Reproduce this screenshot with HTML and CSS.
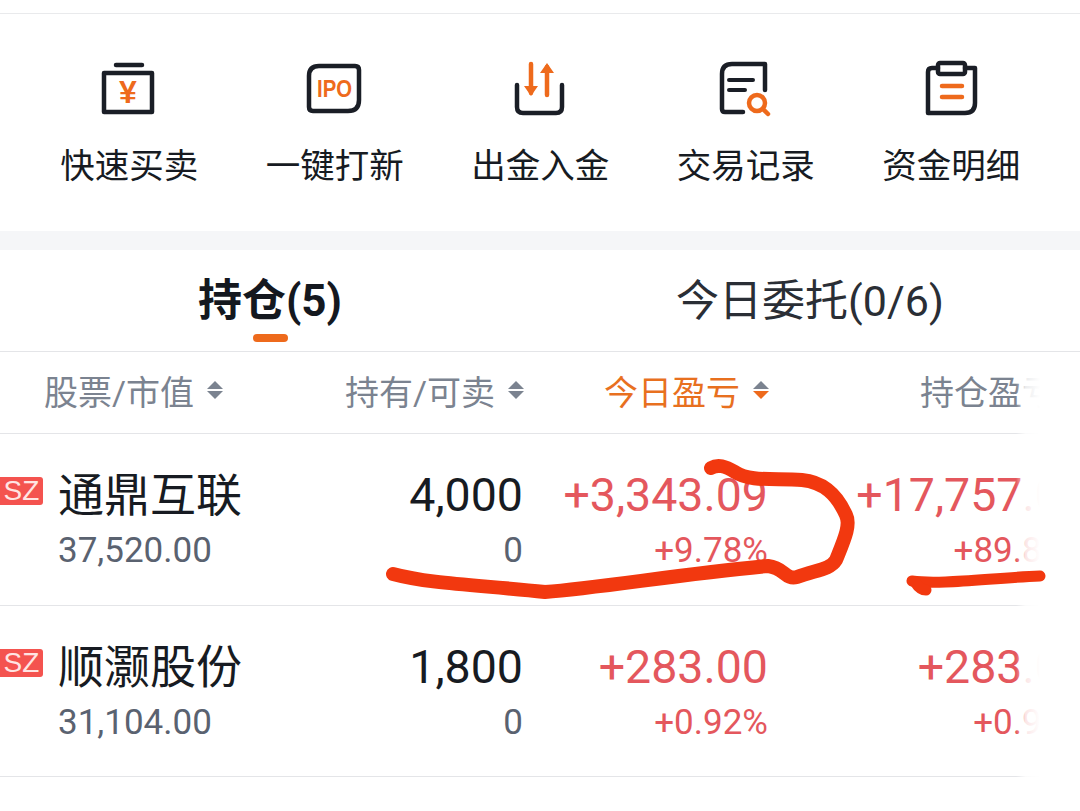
FILE: index.html
```html
<!DOCTYPE html>
<html lang="zh-CN">
<head>
    <meta charset="UTF-8">
    <meta name="viewport" content="width=device-width, initial-scale=1.0">
    <title>持仓</title>
    <link rel="stylesheet" href="styles.css">
</head>
<body>
    <div class="quick-menu">
        <div class="menu-item">
            <svg class="menu-icon" viewBox="0 0 60 60">
                <path class="dark" d="M17 6H43M5 14H53V53H5Z"/>
                <text class="yen" x="29" y="44">¥</text>
            </svg>
            <span>快速买卖</span>
        </div>
        <div class="menu-item">
            <svg class="menu-icon" viewBox="0 0 60 60">
                <path class="dark" d="M14 7H50Q54 7 54 11V41Q54 52 43 52H8Q4 52 4 48V17Q4 7 14 7Z"/>
                <text class="ipo" x="12" y="38" textLength="35" lengthAdjust="spacingAndGlyphs">IPO</text>
            </svg>
            <span>一键打新</span>
        </div>
        <div class="menu-item">
            <svg class="menu-icon" viewBox="0 0 60 60">
                <path class="dark" d="M7 26V48Q7 54 13 54H46Q52 54 52 48V26"/>
                <path class="orange" d="M21 5V34M37 36V8"/>
                <path class="orange-fill" d="M14 27H28L21 37ZM30 14H44L37 4Z"/>
            </svg>
            <span>出金入金</span>
        </div>
        <div class="menu-item">
            <svg class="menu-icon" viewBox="0 0 60 60">
                <path class="dark" d="M49 31V5H16Q6 5 6 15V50Q6 53 9 53H27"/>
                <path class="dark thin" d="M13 21H37M13 31H29"/>
                <circle class="orange" cx="41" cy="44" r="8"/>
                <path class="orange" d="M47 50L52 55"/>
            </svg>
            <span>交易记录</span>
        </div>
        <div class="menu-item">
            <svg class="menu-icon" viewBox="0 0 60 60">
                <rect class="dark" x="17" y="4" width="27" height="11" rx="2"/>
                <path class="dark" d="M17 9H11Q7 9 7 13V54H44Q54 54 54 44V9H44"/>
                <path class="orange" d="M21 27H41M21 38H41"/>
            </svg>
            <span>资金明细</span>
        </div>
    </div>

    <div class="band"></div>

    <div class="tabs">
        <div class="tab active">持仓(5)</div>
        <div class="tab">今日委托(0/6)</div>
    </div>

    <div class="holdings">
        <div class="row head-row">
            <div class="head-cell left">股票/市值<i class="sort"></i></div>
            <div class="head-cell">持有/可卖<i class="sort"></i></div>
            <div class="head-cell current">今日盈亏<i class="sort down"></i></div>
            <div class="head-cell last">持仓盈亏<i class="sort"></i></div>
        </div>
        <div class="row stock-row">
            <div class="stock">
                <span class="badge">SZ</span>
                <div>
                    <div class="big name">通鼎互联</div>
                    <div class="small">37,520.00</div>
                </div>
            </div>
            <div class="num">
                <div class="big">4,000</div>
                <div class="small">0</div>
            </div>
            <div class="num up">
                <div class="big">+3,343.09</div>
                <div class="small">+9.78%</div>
            </div>
            <div class="num up last">
                <div class="big">+17,757.09</div>
                <div class="small">+89.86%</div>
            </div>
        </div>
        <div class="row stock-row">
            <div class="stock">
                <span class="badge">SZ</span>
                <div>
                    <div class="big name">顺灏股份</div>
                    <div class="small">31,104.00</div>
                </div>
            </div>
            <div class="num">
                <div class="big">1,800</div>
                <div class="small">0</div>
            </div>
            <div class="num up">
                <div class="big">+283.00</div>
                <div class="small">+0.92%</div>
            </div>
            <div class="num up last">
                <div class="big">+283.00</div>
                <div class="small">+0.92%</div>
            </div>
        </div>
        <div class="fade"></div>
    </div>

    <!-- hand-drawn marks on top of the screenshot -->
    <svg class="scribble" viewBox="0 0 1080 811">
        <path d="M393 574C430 584 480 585 545 592C600 588 680 574 768 566C785 568 785 580 797 577C815 570 830 570 836 560C844 540 851 525 846 515C837 495 824 482 802 480C775 478 750 482 735 472C725 466 718 464 711 468"/>
        <path class="thin-mark" d="M912 581C940 585 990 578 1040 576"/>
        <path class="thin-mark" d="M915 582Q920 590 926 590"/>
    </svg>
</body>
</html>
```

FILE: styles.css
```css
body {
    margin: 0;
    height: 811px;
    overflow: hidden;
    position: relative;
    background-color: #fff;
    color: #171b22;
    font-family: Roboto, "Noto Sans CJK SC", sans-serif;
}

/* top menu */
.quick-menu {
    display: grid;
    grid-template-columns: repeat(5, 205.5px);
    height: 218px;
    margin-top: 13px;
    padding-left: 26.5px;
    border-top: 1px solid #e9eaec;
    box-sizing: border-box;
}

.menu-item {
    display: flex;
    flex-direction: column;
    align-items: center;
    padding-top: 45px;
    font-size: 34.5px;
    line-height: 50px;
}

.menu-icon {
    width: 60px;
    height: 60px;
    margin-bottom: 22px;
    fill: none;
}

.dark {
    stroke: #1a1e26;
    stroke-width: 4.5;
    stroke-linecap: round;
    stroke-linejoin: round;
    fill: none;
}

.dark.thin {
    stroke-width: 4;
}

.orange {
    stroke: #ee6a1c;
    stroke-width: 4.5;
    stroke-linecap: round;
    fill: none;
}

.orange-fill {
    fill: #ee6a1c;
}

.yen {
    fill: #ee6a1c;
    font-family: "Liberation Sans", sans-serif;
    font-size: 32px;
    font-weight: bold;
    text-anchor: middle;
}

.ipo {
    fill: #ee6a1c;
    font-family: "Liberation Sans", sans-serif;
    font-size: 24px;
    font-weight: bold;
}

.band {
    height: 19px;
    background-color: #f5f6f8;
}

/* tabs */
.tabs {
    display: grid;
    grid-template-columns: 540px 540px;
    height: 102px;
    border-bottom: 1px solid #e4e5e8;
    box-sizing: border-box;
}

.tab {
    position: relative;
    text-align: center;
    font-size: 43px;
    line-height: 102px;
    color: #2a2e35;
}

.tab.active {
    font-size: 44px;
    font-weight: bold;
    color: #14181f;
}

.tab.active::after {
    content: "";
    position: absolute;
    left: 253px;
    bottom: 10px;
    width: 35px;
    height: 8px;
    border-radius: 4px;
    background-color: #ee6a1c;
}

/* table */
.holdings {
    position: relative;
    width: 1040px;
    overflow: hidden;
}

.row {
    display: grid;
    grid-template-columns: 333px 190px 245px 319px;
    width: 1090px;
    border-bottom: 1px solid #e4e5e8;
    box-sizing: border-box;
}

.head-row {
    height: 82px;
    padding-bottom: 5px;
    align-items: center;
}

.head-cell {
    display: flex;
    align-items: center;
    justify-content: flex-end;
    gap: 13px;
    font-size: 34px;
    color: #7b8390;
}

.head-cell.left {
    justify-content: flex-start;
    padding-left: 44px;
}

.head-cell.current {
    color: #e8701f;
}

.head-cell.last {
    justify-content: flex-start;
    padding-left: 152px;
    white-space: nowrap;
}

.sort {
    display: inline-block;
    position: relative;
    width: 16px;
    height: 18px;
    margin-right: -1px;
}

.sort::before,
.sort::after {
    content: "";
    position: absolute;
    left: 0;
    border-left: 8px solid transparent;
    border-right: 8px solid transparent;
}

.sort::before {
    top: 0;
    border-bottom: 8px solid #7b8390;
}

.sort::after {
    bottom: 0;
    border-top: 8px solid #7b8390;
}

.sort.down::after {
    border-top-color: #ee6a1c;
}

.stock-row {
    height: 171.5px;
    padding-top: 32px;
}

.stock {
    display: flex;
    gap: 15px;
}

.badge {
    align-self: flex-start;
    width: 43px;
    height: 28px;
    margin-top: 11px;
    border-radius: 0 3px 3px 0;
    background-color: #f4534f;
    color: #ffe4e2;
    font-family: "Liberation Sans", sans-serif;
    font-size: 28px;
    line-height: 28px;
    text-align: center;
}

.big {
    font-size: 46.5px;
    line-height: 58px;
    white-space: nowrap;
}

.big.name {
    font-size: 46px;
}

.small {
    margin-top: 5px;
    font-size: 35px;
    line-height: 44px;
    color: #5a6270;
}

.num {
    text-align: right;
}

.up .big,
.up .small {
    color: #e4575d;
}

.fade {
    position: absolute;
    top: 0;
    right: 0;
    bottom: 0;
    width: 24px;
    background: linear-gradient(to right, rgba(255, 255, 255, 0), rgba(255, 255, 255, 0.85) 40%, #fff);
}

.scribble {
    position: absolute;
    top: 0;
    left: 0;
    width: 1080px;
    height: 811px;
}

.scribble path {
    fill: none;
    stroke: #f2380f;
    stroke-width: 14;
    stroke-linecap: round;
    stroke-linejoin: round;
}

.scribble .thin-mark {
    stroke-width: 11;
}
```
